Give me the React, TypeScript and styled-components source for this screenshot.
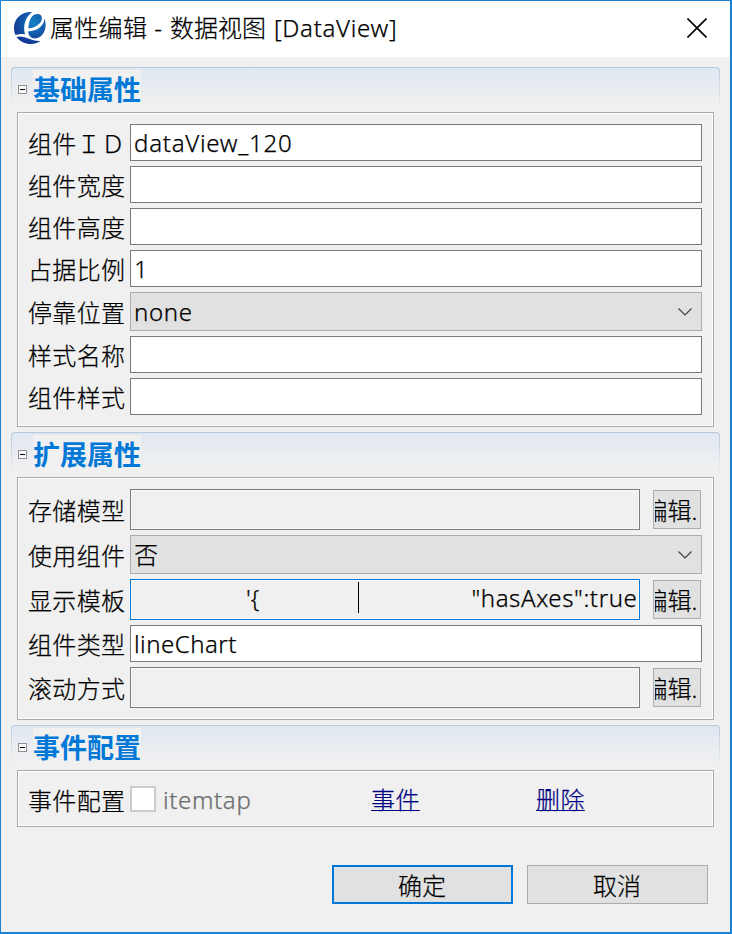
import React from 'react';
import styled, { createGlobalStyle } from 'styled-components';

const Global = createGlobalStyle`
  * { box-sizing: border-box; }
  body { margin: 0; }
`;

const Dialog = styled.div`
  width: 732px;
  height: 934px;
  border: 1px solid #1883d7;
  border-right-width: 2px;
  border-bottom-width: 2px;
  background: #f0f0f0;
  color: #000;
  font: 300 24px/36px "Noto Sans", "Noto Sans CJK SC", sans-serif;
  -webkit-text-stroke: 0.25px currentColor;
  white-space: pre;
  overflow: hidden;
`;

const TitleBar = styled.header`
  height: 56px;
  background: #fff;
  display: flex;
  align-items: center;
  padding: 0 23px 2px 12px;
`;

const Title = styled.h1`
  margin: 0 auto 0 3px;
  font: inherit;
  display: flex;
`;

const Run = styled.span<{ $w?: number; $spacing?: number }>`
  display: inline-block;
  flex: none;
  width: ${p => (p.$w ? `${p.$w}px` : 'auto')};
  letter-spacing: ${p => p.$spacing ?? 0}px;
`;

const CloseButton = styled.button`
  border: 0;
  padding: 0;
  background: none;
  display: flex;
`;

const Body = styled.main`
  padding: 10px 10px 0;
`;

const Section = styled.section`
  margin-bottom: 5px;
`;

const SectionHead = styled.div`
  height: 45px;
  width: 709px;
  padding: 2px 0 0 7px;
  display: flex;
  align-items: flex-start;
  border-radius: 4px 4px 0 0;
  border: 1px solid transparent;
  border-bottom: 0;
  background:
    linear-gradient(#e1e8f2, #f0f0f0 38px) padding-box,
    linear-gradient(#b4cadd, #f0f0f0 42px) border-box;
`;

const Toggle = styled.span`
  width: 9px;
  height: 9px;
  margin: 15px 6px 0 -1px;
  border: 1px solid #919191;
  background: #f8f8f8;
  display: flex;
  align-items: center;
  justify-content: center;
  &::before { content: ''; width: 5px; height: 1px; background: #000; }
`;

const SectionTitle = styled.h2`
  margin: 0;
  height: 35px;
  width: 108px;
  background: #f0f0f0;
  color: #0078d7;
  font-size: 27px;
  font-weight: 700;
  line-height: 40px;
  -webkit-text-stroke: 0;
`;

const Panel = styled.div<{ $h: number }>`
  margin-left: 6px;
  width: 697px;
  height: ${p => p.$h}px;
  border: 1px solid #a8a9ae;
  box-shadow: inset 0 0 0 1px #fff;
  padding: 11px 11px 0;
  display: flex;
  flex-direction: column;
  gap: 5px;
`;

const Row = styled.div`
  display: flex;
  align-items: center;
`;

const EventRow = styled(Row)`
  margin-top: -1px;
`;

const Label = styled.label`
  width: 102px;
  margin-left: -1px;
  flex: none;
  height: 36px;
  line-height: 38px;
  letter-spacing: 0.35px;
`;

const Field = styled.div<{ $kind: 'text' | 'select' | 'area'; $focus?: boolean }>`
  width: ${p => (p.$kind === 'area' ? 510 : 572)}px;
  height: ${p => ({ text: 37, select: 39, area: 41 })[p.$kind]}px;
  border: 1px solid ${p => (p.$focus ? '#0078d7' : p.$kind === 'select' ? '#adadad' : '#7a7a7a')};
  background: ${p => ({ text: '#fff', select: '#e1e1e1', area: '#f0f0f0' })[p.$kind]};
  box-shadow: ${p => (p.$kind === 'area' ? 'inset 0 0 0 1px #fbfbfb' : 'none')};
  padding: 0 9px 0 3px;
  display: flex;
  align-items: center;
`;

const Chevron = styled.svg`
  margin-left: auto;
`;

const EditButton = styled.button`
  width: 48px;
  height: 39px;
  margin-left: 13px;
  padding: 0 2px 0 1px;
  border: 1px solid #adadad;
  background: #e1e1e1;
  font: inherit;
  color: inherit;
  display: flex;
  align-items: center;
`;

const Clip = styled.span`
  width: 43px;
  height: 37px;
  line-height: 40px;
  overflow: hidden;
  text-indent: -11.5px;
`;

const TemplateText = styled.span`
  flex: 1;
  display: flex;
  align-items: center;
  padding: 0 0 3px 112px;
  margin-right: -9px;
`;

const Caret = styled.i`
  width: 1px;
  height: 31px;
  background: #000;
  margin: 0 112px 2px 99px;
`;

const Checkbox = styled.span`
  width: 26px;
  height: 26px;
  border: 2px solid #ccc;
  background: #fff;
  margin: 0 7px 2px 0;
`;

const EventName = styled.span`
  color: #6d6d6d;
  width: 208px;
  letter-spacing: 0.65px;
`;

const Link = styled.a`
  color: #000080;
  width: 49px;
  padding-top: 1px;
  margin-right: 116px;
  letter-spacing: 0.4px;
  text-decoration: underline;
  text-decoration-thickness: 1px;
  text-underline-offset: 1px;
`;

const Footer = styled.footer`
  display: flex;
  gap: 14px;
  padding: 33px 0 0 321px;
`;

const ActionButton = styled.button<{ $primary?: boolean }>`
  width: 181px;
  height: 39px;
  padding: 2px 1px 0 0;
  border: ${p => (p.$primary ? '2px solid #0078d7' : '1px solid #adadad')};
  background: #e1e1e1;
  font: inherit;
  color: inherit;
  display: flex;
  align-items: center;
  justify-content: center;
`;

function Logo() {
  return (
    <svg width="34" height="34" viewBox="0 0 34 34">
      <defs>
        <radialGradient id="globe" gradientUnits="userSpaceOnUse" cx="21" cy="12" r="20">
          <stop offset="0" stopColor="#1382c8" />
          <stop offset="1" stopColor="#133a94" />
        </radialGradient>
      </defs>
      <path d="M19 1C8 .5 1 8 1 17c0 3 .6 5 1.500 7 3.500-1 6.500-1.200 9.500-.5C9.500 14 13 6 19 1Z" fill="url(#globe)" />
      <path d="M15.500 17.500C15.500 9 19 3 24.500 3c4.500 0 6 5 2.500 9-3 3.500-7.500 5-11.500 5.500Z" fill="url(#globe)" />
      <path d="M31.500 7.500C35 17 30 27.500 22 27.500c-4 0-6.500-3-7-7C24 20 31 15 31.500 7.500Z" fill="url(#globe)" />
      <path d="M3.500 26c9-2.500 13 4.500 24 4C21 35 9 34 3.500 26Z" fill="url(#globe)" />
    </svg>
  );
}

function Select({ value }: { value: string }) {
  return (
    <Field $kind="select">
      <Run $spacing={0.7}>{value}</Run>
      <Chevron width="14" height="8" viewBox="0 0 14 8">
        <path d="M.5.5 7 7 13.500.5" fill="none" stroke="#404040" strokeWidth="1.200" />
      </Chevron>
    </Field>
  );
}

function Edit() {
  return (
    <EditButton><Clip>编辑...</Clip></EditButton>
  );
}

function Group({ title, height, children }: { title: string; height: number; children: React.ReactNode }) {
  return (
    <Section>
      <SectionHead><Toggle /><SectionTitle>{title}</SectionTitle></SectionHead>
      <Panel $h={height}>{children}</Panel>
    </Section>
  );
}

function TextRow({ label, value = '', spacing = 0 }: { label: string; value?: string; spacing?: number }) {
  return (
    <Row><Label>{label}</Label><Field $kind="text"><Run $spacing={spacing}>{value}</Run></Field></Row>
  );
}

export default function App() {
  return (
    <>
      <Global />
      <Dialog>
        <TitleBar>
          <Logo />
          <Title>
            <Run $w={97} $spacing={0.3}>属性编辑</Run><Run $w={23} $spacing={1}> - </Run><Run $w={97}>数据视图</Run><Run $spacing={0.7}> [DataView]</Run>
          </Title>
          <CloseButton aria-label="关闭">
            <svg width="20" height="20" viewBox="0 0 20 20">
              <path d="M.5.5l19 19M19.500.5l-19 19" stroke="#000" strokeWidth="1.600" />
            </svg>
          </CloseButton>
        </TitleBar>
        <Body>
          <Group title="基础属性" height={315}>
            <TextRow label="组件ＩＤ" value="dataView_120" spacing={0.75} />
            <TextRow label="组件宽度" />
            <TextRow label="组件高度" />
            <TextRow label="占据比例" value="1" />
            <Row><Label>停靠位置</Label><Select value="none" /></Row>
            <TextRow label="样式名称" />
            <TextRow label="组件样式" />
          </Group>
          <Group title="扩展属性" height={243}>
            <Row><Label>存储模型</Label><Field $kind="area" /><Edit /></Row>
            <Row><Label>使用组件</Label><Select value="否" /></Row>
            <Row>
              <Label>显示模板</Label>
              <Field $kind="area" $focus>
                <TemplateText>{"'{"}<Caret /><Run $spacing={0.6}>"hasAxes":true</Run></TemplateText>
              </Field>
              <Edit />
            </Row>
            <TextRow label="组件类型" value="lineChart" spacing={0.5} />
            <Row><Label>滚动方式</Label><Field $kind="area" /><Edit /></Row>
          </Group>
          <Group title="事件配置" height={57}>
            <EventRow>
              <Label>事件配置</Label><Checkbox /><EventName>itemtap</EventName>
              <Link>事件</Link><Link>删除</Link>
            </EventRow>
          </Group>
          <Footer>
            <ActionButton $primary>确定</ActionButton>
            <ActionButton>取消</ActionButton>
          </Footer>
        </Body>
      </Dialog>
    </>
  );
}
